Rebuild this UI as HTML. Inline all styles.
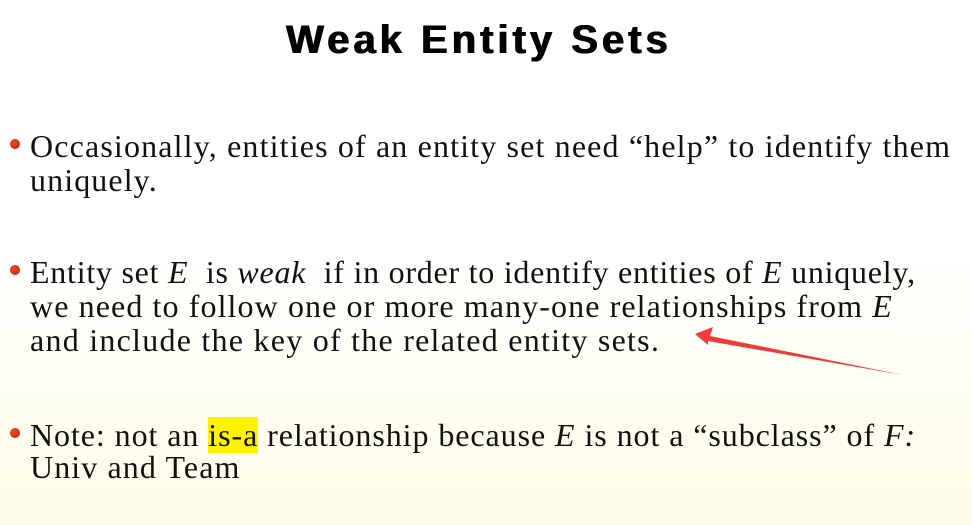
<!DOCTYPE html>
<html><head><meta charset="utf-8"><style>
html,body{margin:0;padding:0}
body{width:972px;height:525px;overflow:hidden;position:relative;
background:linear-gradient(to bottom,#ffffff 0%,#ffffff 45%,#fefdf0 80%,#fdfbe6 100%);}
.t{position:absolute;left:0;width:958px;text-align:center;top:18px;font:bold 40px "Liberation Sans",sans-serif;color:#000;letter-spacing:4px;text-shadow:0.6px 0 0 #000,-0.6px 0 0 #000}
.l{position:absolute;left:30px;font-family:"Liberation Serif",serif;font-size:32px;color:#111;white-space:nowrap;letter-spacing:1.1px}
.b{position:absolute;left:10px;width:10px;height:10px;border-radius:50%;background:radial-gradient(circle at 40% 40%,#f04a2a,#c01808)}
i{font-style:italic}
.hl{background:#fff200}
</style></head><body>
<div class="t">Weak Entity Sets</div>
<div class="b" style="top:139px"></div>
<div class="l" style="top:128px;letter-spacing:1.15px">Occasionally, entities of an entity set need “help” to identify them</div>
<div class="l" style="top:162px">uniquely.</div>
<div class="b" style="top:265px"></div>
<div class="l" style="top:254px;letter-spacing:0.75px">Entity set <i>E</i>&nbsp; is <i>weak</i>&nbsp; if in order to identify entities of <i>E</i> uniquely,</div>
<div class="l" style="top:288px">we need to follow one or more many-one relationships from <i>E</i></div>
<div class="l" style="top:322px;letter-spacing:1.25px">and include the key of the related entity sets.</div>
<div class="b" style="top:428px"></div>
<div class="l" style="top:417px;letter-spacing:0.93px">Note: not an <span class="hl">is-a</span> relationship because <i>E</i> is not a “subclass” of <i>F:</i></div>
<div class="l" style="top:449px">Univ and Team</div>
<svg style="position:absolute;left:0;top:0" width="972" height="525">
<polygon points="695,334 713,327 710,336 903,375 708,341 708,345" fill="#f03a3a"/>
</svg>
</body></html>
